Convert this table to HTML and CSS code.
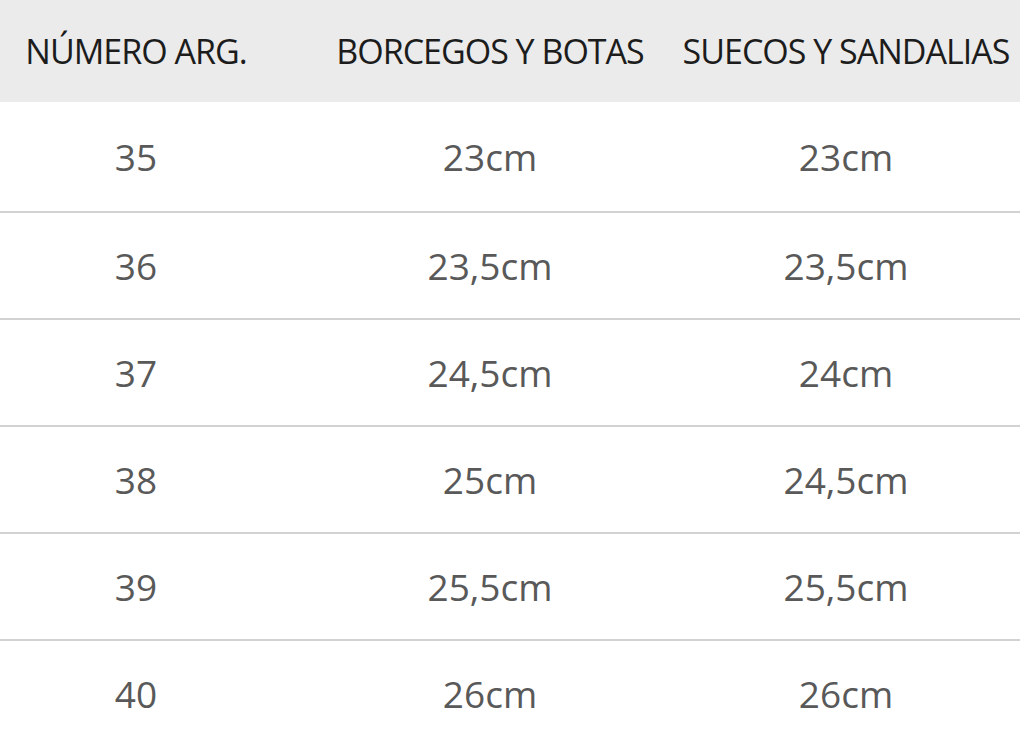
FILE: index.html
```html
<!DOCTYPE html>
<html lang="es">
<head>
<meta charset="utf-8">
<title>Tabla de talles</title>
<link rel="stylesheet" href="styles.css">
</head>
<body>
<div class="table">
  <div class="row head">
    <div class="cell">NÚMERO ARG.</div>
    <div class="cell">BORCEGOS Y BOTAS</div>
    <div class="cell">SUECOS Y SANDALIAS</div>
  </div>
  <div class="row first">
    <div class="cell">35</div>
    <div class="cell">23cm</div>
    <div class="cell">23cm</div>
  </div>
  <div class="row">
    <div class="cell">36</div>
    <div class="cell">23,5cm</div>
    <div class="cell">23,5cm</div>
  </div>
  <div class="row">
    <div class="cell">37</div>
    <div class="cell">24,5cm</div>
    <div class="cell">24cm</div>
  </div>
  <div class="row">
    <div class="cell">38</div>
    <div class="cell">25cm</div>
    <div class="cell">24,5cm</div>
  </div>
  <div class="row">
    <div class="cell">39</div>
    <div class="cell">25,5cm</div>
    <div class="cell">25,5cm</div>
  </div>
  <div class="row last">
    <div class="cell">40</div>
    <div class="cell">26cm</div>
    <div class="cell">26cm</div>
  </div>
</div>
</body>
</html>
```
FILE: styles.css
```css
html, body {
  margin: 0;
  padding: 0;
  background: #ffffff;
}
body {
  font-family: "Open Sans", "Liberation Sans", sans-serif;
  overflow: hidden;
}
.table {
  width: 1020px;
}
.row {
  display: grid;
  grid-template-columns: 272px 436px 276px 36px;
  align-items: center;
  height: 105px;
  border-bottom: 2px solid #d2d2d2;
  color: #595959;
  font-size: 37px;
}
.row.first {
  height: 109px;
}
.row.last {
  border-bottom: none;
}
.row.head {
  height: 102px;
  background: #ebebeb;
  border-bottom: none;
  color: #1c1c1c;
  font-size: 34px;
  letter-spacing: -1px;
}
.cell {
  display: flex;
  justify-content: center;
  white-space: nowrap;
}
```
